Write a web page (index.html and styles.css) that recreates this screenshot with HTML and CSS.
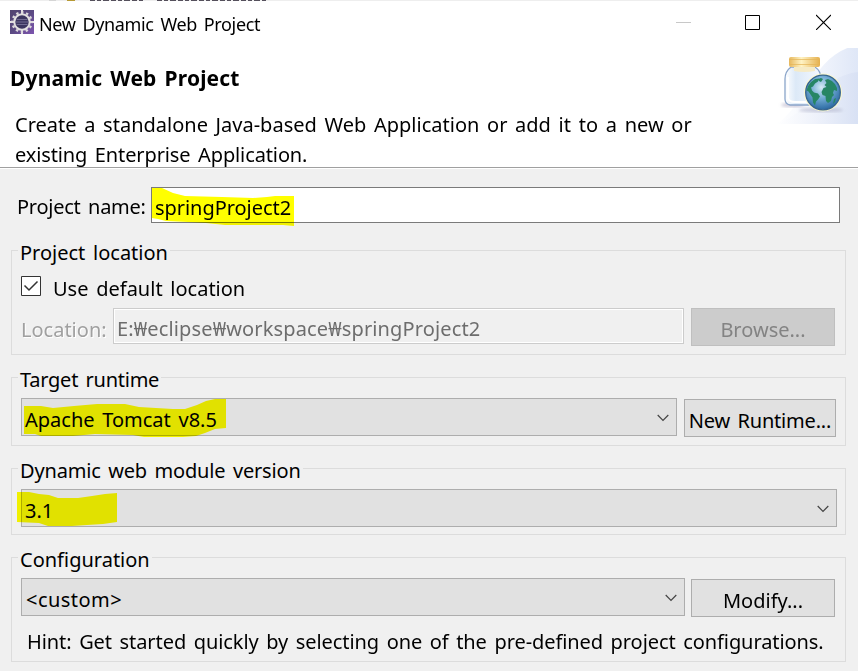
FILE: index.html
```html
<!DOCTYPE html>
<html lang="en">
<head>
<meta charset="utf-8">
<title>New Dynamic Web Project</title>
<link rel="stylesheet" href="styles.css">
</head>
<body>
<div class="dialog">
  <div class="backdrop">
    <svg width="858" height="1" viewBox="0 0 858 1" shape-rendering="crispEdges"><path d="M49 .5h7" stroke="#d5d5d5"/><path d="M67 .5h8" stroke="#b79a35"/><path d="M90 .5h55M157 .5h109" stroke="#55505c" stroke-dasharray="5 2 4 2 6 2"/></svg>
  </div>
  <header class="titlebar">
    <svg class="app-icon" width="24" height="24" viewBox="0 0 24 24">
      <defs><linearGradient id="app" x2="1" y2="1"><stop stop-color="#51436f"/><stop offset=".5" stop-color="#5b4a83"/><stop offset="1" stop-color="#7e55b0"/></linearGradient></defs>
      <rect width="24" height="24" fill="url(#app)"/>
      <path d="M12 0v4M12 20v4M0 12h4M20 12h4" stroke="#e6e3e6" stroke-width="2"/>
      <circle cx="12" cy="12" r="9.600" fill="none" stroke="#dcd8dc" stroke-width="2.400" stroke-dasharray="2.400 2.627" stroke-dashoffset="1.200"/>
      <circle cx="12" cy="12" r="7.700" fill="#3c3560" stroke="#e2dfe0" stroke-width="2"/>
      <path d="M6.500 9.500h11M6 12h12M6.500 14.500h11" stroke="#716b92" stroke-width="1.200"/>
    </svg>
    <span class="caption">New Dynamic Web Project</span>
    <div class="controls">
      <svg width="15" height="16" viewBox="0 0 15 16"><path d="M0 8.500h15" stroke="#c8c8c8"/></svg>
      <svg width="15" height="16" viewBox="0 0 15 16"><path d="M.5 1.500h14v14H.5z" fill="none" stroke="#000"/></svg>
      <svg class="close" width="15" height="16" viewBox="0 0 15 16"><path d="M0 1l15 15M15 1L0 16" stroke="#000" stroke-width="1.100"/></svg>
    </div>
  </header>
  <section class="banner">
    <div class="intro">
      <h1>Dynamic Web Project</h1>
      <p><span class="l1">Create a standalone Java-based Web Application or add it to a new or</span><br><span class="l2">existing Enterprise Application.</span></p>
    </div>
    <svg class="art" width="82" height="76" viewBox="0 0 82 76">
      <defs>
        <linearGradient id="sky"><stop stop-color="#fff"/><stop offset=".5" stop-color="#ecf0fa"/><stop offset="1" stop-color="#d6dff3"/></linearGradient>
        <linearGradient id="swoosh"><stop stop-color="#fff"/><stop offset=".5" stop-color="#f2f5fc"/><stop offset="1" stop-color="#dfe7f7"/></linearGradient>
        <linearGradient id="glass"><stop stop-color="#fff"/><stop offset=".3" stop-color="#dce9f7"/><stop offset="1" stop-color="#f5f9ff"/></linearGradient>
        <linearGradient id="lid"><stop stop-color="#e6b75c"/><stop offset=".4" stop-color="#fff3c4"/><stop offset="1" stop-color="#e5b04e"/></linearGradient>
        <radialGradient id="sea" cx=".45" cy=".35" r=".65"><stop stop-color="#d5eaf5"/><stop offset=".5" stop-color="#6fa9d2"/><stop offset="1" stop-color="#2c6aa3"/></radialGradient>
        <filter id="soft"><feGaussianBlur stdDeviation="1.500"/></filter>
      </defs>
      <path d="M0 76C28 61 37 5 82-3V76z" fill="url(#swoosh)"/>
      <path d="M0 76C35 65 45 28 82 24V76z" fill="url(#sky)" opacity=".75"/>
      <ellipse cx="45" cy="62" rx="22" ry="2.500" fill="#a9abc4" opacity=".5" filter="url(#soft)"/>
      <ellipse cx="17" cy="57" rx="12" ry="2.500" fill="#a9a0bc" opacity=".5" filter="url(#soft)"/>
      <path d="M15 19C11 22 9 25 9 31V51Q9 56 14 57H40Q45 56 45 50V31C45 25 42 21 39 19z" fill="url(#glass)" stroke="#8aa5ca" stroke-width="1.300"/>
      <path d="M12 29V50Q13 54 19 54H38" fill="none" stroke="#fff" stroke-width="2"/>
      <path d="M18 19h21v4q-11 2-21 0z" fill="#f6ebc6"/>
      <rect x="13" y="9" width="31" height="10" rx="2" fill="url(#lid)"/>
      <path d="M13 11.500h31M14 16.500h29" stroke="#e5b557" opacity=".7"/>
      <circle cx="47" cy="44.500" r="19" fill="#fbf7cc"/>
      <circle cx="47" cy="44.500" r="17.300" fill="url(#sea)" stroke="#36648f" stroke-width="1.300"/>
      <path d="M32 38l3-4 4-3 4-.5-1 3-3 2-2 3-2 1 1 3 2 2 4 1 2 3-2 3-2 2-1 4-2-3-.5-5-2-3-2-3-2-1zM42 31l3-1 2 1-2 3-2-1zM49 32l3-1 4 2 3 3 2 4 0 3-3-1-1 3 1 2-2 2-1 4-3 2-2-2-.5-5-3-1-1-3 2-4 3-1-2-2 2-2zM58 51l2-1-1 4-2 2z" fill="#278665"/>
    </svg>
  </section>
  <main>
    <div class="name-row">
      <label>Project name:</label>
      <div class="input name"><span>springProject2</span></div>
      <svg class="mark mark-name" width="144" height="42" viewBox="0 0 144 42"><path d="M1 3H11L22 8 34 11 71 12 102 13 116 12 124 11H143V41L132 40H74L55 38 37 37 15 36 7 34 1 33z" fill="#ff0"/></svg>
    </div>

    <section class="group location">
      <h2 class="g1">Project location</h2>
      <div class="check-row">
        <svg width="20" height="20" viewBox="0 0 20 20"><path d="M.5.5h19v19H.5z" fill="#fff" stroke="#333"/><path d="M3.500 9.500L8 14 16.500 5.500" fill="none" stroke="#333" stroke-width="1.500"/></svg>
        <label>Use default location</label>
      </div>
      <div class="path-row">
        <label class="disabled">Location:</label>
        <div class="input off"><span>E:₩eclipse₩workspace₩springProject2</span></div>
        <div class="button off-btn"><span>Browse...</span></div>
      </div>
    </section>

    <section class="group runtime">
      <h2 class="g2">Target runtime</h2>
      <div class="row">
        <div class="select"><span class="s1">Apache Tomcat v8.5</span><svg width="12" height="8" viewBox="0 0 12 8"><path d="M.7 1l5.300 5.300L11.300 1" fill="none" stroke="#444" stroke-width="1.200"/></svg></div>
        <div class="button wide"><span>New Runtime...</span></div>
      </div>
      <svg class="mark mark-runtime" width="203" height="40" viewBox="0 0 203 40"><path d="M1 8H18L30 10 51 8 74 6H102L116 9 150 11H162L174 7 183 3 192 1H203V30L192 31 182 35 173 38 160 39H121L110 37 72 36 50 38H18L12 36H1z" fill="#ff0"/></svg>
    </section>

    <section class="group module">
      <h2 class="g3">Dynamic web module version</h2>
      <div class="row">
        <div class="select"><span>3.1</span><svg width="12" height="8" viewBox="0 0 12 8"><path d="M.7 1l5.300 5.300L11.300 1" fill="none" stroke="#444" stroke-width="1.200"/></svg></div>
      </div>
      <svg class="mark mark-module" width="100" height="36" viewBox="0 0 100 36"><path d="M0 1H12L22 3 32 4 41 7H61L75 5 88 3 100 2V31L86 33 70 34 55 35H31L22 32 0 31z" fill="#ff0"/></svg>
    </section>

    <section class="group config">
      <h2 class="g4">Configuration</h2>
      <div class="row">
        <div class="select custom"><span>&lt;custom&gt;</span><svg width="12" height="8" viewBox="0 0 12 8"><path d="M.7 1l5.300 5.300L11.300 1" fill="none" stroke="#444" stroke-width="1.200"/></svg></div>
        <div class="button modify"><span>Modify...</span></div>
      </div>
      <p class="hint">Hint: Get started quickly by selecting one of the pre-defined project configurations.</p>
    </section>
  </main>
</div>
</body>
</html>
```
FILE: styles.css
```css
* { box-sizing: border-box; }
body {
  margin: 0;
  width: 858px;
  height: 671px;
  overflow: hidden;
  background: #f0f0f0;
  color: #000;
  font: 20px/30px "Noto Sans", "Open Sans", "Noto Sans CJK KR", sans-serif;
  word-spacing: 2.5px;
  white-space: nowrap;
}
h1, h2, p { margin: 0; font-size: 20px; font-weight: 400; }
svg { display: block; flex: none; }
.dialog { display: flex; flex-direction: column; height: 671px; }
.backdrop { height: 1px; background: #eee; }
.titlebar { display: flex; height: 47px; padding: 9px 27px 0 10px; background: #fff; }
.caption { margin-left: 5px; font-size: 18px; line-height: 28px; letter-spacing: -.35px; }
.controls { display: flex; gap: 54px; margin: 4px 0 0 auto; }
.close { margin-left: 2px; }
.banner { display: flex; justify-content: space-between; height: 120px; background: #fff; border-bottom: 1px solid #a0a0a0; padding-left: 10px; }
.intro { padding-top: 15px; }
h1 { font-size: 21px; font-weight: 700; line-height: 30px; letter-spacing: .15px; }
.intro p { margin: 17px 0 0 5px; }
.l2 { letter-spacing: -.12px; }
main { flex: 1; border-top: 1px solid #fff; padding: 18px 12px 0 11px; }
.name-row { position: relative; display: flex; height: 36px; padding-right: 6px; margin-bottom: 27px; }
.name-row label { width: 134px; margin-left: 6px; line-height: 40px; letter-spacing: -.25px; }
.input { flex: 1; border: 1px solid #7a7a7a; background: #fff; line-height: 40px; padding-left: 3px; }
.name { letter-spacing: -.05px; }
.group { position: relative; border: 1px solid #dcdcdc; padding-left: 9px; }
.group h2 { position: absolute; left: 6px; top: -13px; padding: 0 2px; background: #f0f0f0; }
.group .g2 { letter-spacing: -.25px; }
.group .g3 { letter-spacing: -.17px; }
.location { height: 105px; margin-bottom: 22px; padding-top: 25px; }
.runtime { height: 69px; margin-bottom: 22px; padding-top: 20px; }
.module { height: 67px; margin-bottom: 22px; padding-top: 20px; }
.config { height: 105px; padding-top: 20px; }
.check-row { display: flex; height: 32px; }
.check-row label { margin-left: 12px; line-height: 26px; }
.path-row { display: flex; padding-right: 10px; }
.path-row label { width: 92px; line-height: 44px; }
.disabled { color: #a0a0a0; text-shadow: 1px 1px #fff; }
.off { height: 36px; border-color: #ccc; background: #f0f0f0; box-shadow: inset 0 0 0 1px #fff; color: #6d6d6d; letter-spacing: .14px; }
.button { width: 144px; height: 38px; margin-left: 7px; border: 1px solid #adadad; background: #e1e1e1; text-align: center; line-height: 42px; }
.off-btn { border-color: #bfbfbf; background: #ccc; color: #838383; }
.row { display: flex; padding-right: 9px; }
.module .row { padding-right: 8px; }
.select { flex: 1; display: flex; justify-content: space-between; height: 38px; border: 1px solid #adadad; background: #e1e1e1; padding: 0 7px 0 3px; line-height: 42px; }
.select svg { margin-top: 15px; }
.custom { padding-left: 4px; }
.custom span { letter-spacing: .45px; }
.wide { width: 152px; margin-top: 1px; letter-spacing: -.2px; }
.modify { margin: 1px 1px 0 6px; }
.hint { margin: 10px 0 0 6px; letter-spacing: -.08px; }
.mark { position: absolute; mix-blend-mode: multiply; }
.mark-name { left: 140px; top: -2px; }
.mark-runtime { left: 11px; top: 20px; }
.mark-module { left: 5px; top: 22px; }
```
